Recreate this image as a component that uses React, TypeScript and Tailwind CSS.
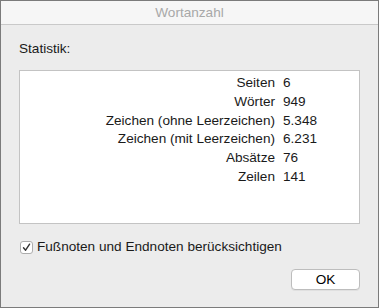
import * as React from 'react';

const stats: { label: string; value: string }[] = [
  { label: 'Seiten', value: '6' },
  { label: 'Wörter', value: '949' },
  { label: 'Zeichen (ohne Leerzeichen)', value: '5.348' },
  { label: 'Zeichen (mit Leerzeichen)', value: '6.231' },
  { label: 'Absätze', value: '76' },
  { label: 'Zeilen', value: '141' },
];

export default function App() {
  const [checked, setChecked] = React.useState(true);

  return (
    <div
      className="flex h-[308px] w-[379px] flex-col border border-[#7b7b7b] bg-[#ececec] text-[13.6px] text-[#1a1a1a]"
      style={{ fontFamily: '"Liberation Sans", Arial, sans-serif' }}
    >
      <div className="h-[24px] shrink-0 border-b border-[#c9c9c9] bg-[#f6f6f6] text-center leading-[23px] text-[#a8a8a8]">
        Wortanzahl
      </div>

      <div className="flex flex-1 flex-col px-[18px] pt-[16px]">
        <p className="leading-[16px]">Statistik:</p>

        <div className="mt-[13px] h-[154px] border border-[#c3c3c3] bg-white pt-[3px]">
          {stats.map((s) => (
            <div key={s.label} className="flex leading-[18.8px]">
              <span className="w-[255px] text-right">{s.label}</span>
              <span className="ml-[8px]">{s.value}</span>
            </div>
          ))}
        </div>

        <label className="mt-[15px] flex items-center gap-[4px] leading-[16px]">
          <button
            type="button"
            onClick={() => setChecked(!checked)}
            className="ml-[1px] flex h-[13px] w-[13px] items-center justify-center rounded-[3px] border border-[#adadad] bg-white"
          >
            {checked && (
              <svg width="9" height="9" viewBox="0 0 9 9" fill="none">
                <path d="M1.5 4.8 L3.6 7.2 L7.6 1.2" stroke="#333" strokeWidth="1.4" strokeLinecap="round" strokeLinejoin="round" />
              </svg>
            )}
          </button>
          <span>Fußnoten und Endnoten berücksichtigen</span>
        </label>

        <div className="mt-[14px] flex justify-end">
          <button
            type="button"
            className="h-[21px] w-[69px] rounded-[4px] border border-[#bdbdbd] bg-white leading-[19px] text-black shadow-[0_1px_0_rgba(0,0,0,0.05)]"
          >
            OK
          </button>
        </div>
      </div>
    </div>
  );
}
